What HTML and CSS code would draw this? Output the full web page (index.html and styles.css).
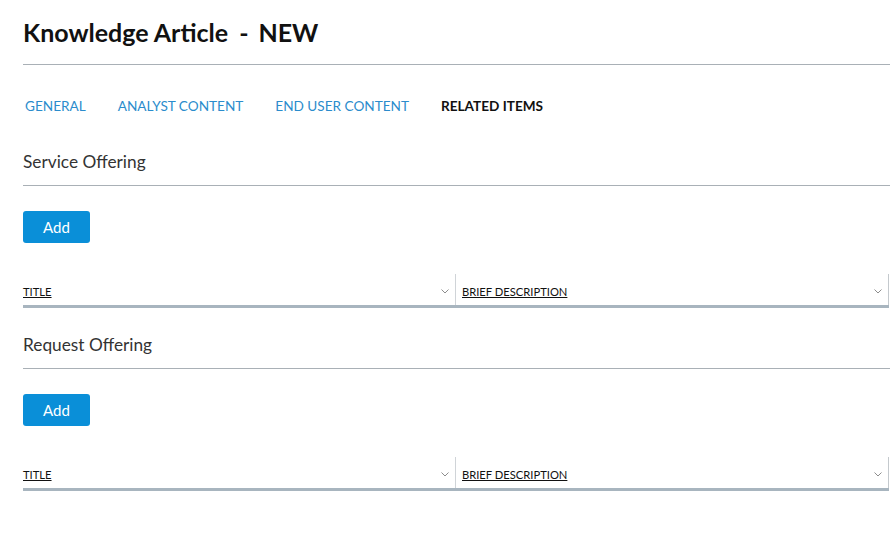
FILE: index.html
```html
<!DOCTYPE html>
<html>
<head>
<meta charset="utf-8">
<link rel="stylesheet" href="styles.css">
</head>
<body>
<div class="page">
  <h1 class="title">Knowledge Article<span class="sep">-</span>NEW</h1>
  <nav class="tabs">
    <span class="tab">GENERAL</span>
    <span class="tab">ANALYST CONTENT</span>
    <span class="tab">END USER CONTENT</span>
    <span class="tab active">RELATED ITEMS</span>
  </nav>

  <section class="section">
    <h2 class="section-title">Service Offering</h2>
    <div class="actions"><button class="btn">Add</button></div>
    <div class="grid-head">
      <div class="col col-title"><span class="col-label">TITLE</span><svg class="chev" viewBox="0 0 8 5" width="8" height="5"><path d="M0.5 0.5l3.5 3.5 3.5-3.5" fill="none" stroke="#8d8d8d" stroke-width="1"/></svg></div>
      <div class="col col-desc"><span class="col-label">BRIEF DESCRIPTION</span><svg class="chev" viewBox="0 0 8 5" width="8" height="5"><path d="M0.5 0.5l3.5 3.5 3.5-3.5" fill="none" stroke="#8d8d8d" stroke-width="1"/></svg></div>
    </div>
  </section>

  <section class="section">
    <h2 class="section-title">Request Offering</h2>
    <div class="actions"><button class="btn">Add</button></div>
    <div class="grid-head">
      <div class="col col-title"><span class="col-label">TITLE</span><svg class="chev" viewBox="0 0 8 5" width="8" height="5"><path d="M0.5 0.5l3.5 3.5 3.5-3.5" fill="none" stroke="#8d8d8d" stroke-width="1"/></svg></div>
      <div class="col col-desc"><span class="col-label">BRIEF DESCRIPTION</span><svg class="chev" viewBox="0 0 8 5" width="8" height="5"><path d="M0.5 0.5l3.5 3.5 3.5-3.5" fill="none" stroke="#8d8d8d" stroke-width="1"/></svg></div>
    </div>
  </section>
</div>
</body>
</html>
```

FILE: styles.css
```css
html, body {
  margin: 0;
  padding: 0;
  background: #fff;
}
body {
  font-family: "Lato", "Liberation Sans", sans-serif;
  color: #222;
}
.page {
  padding: 16px 0 0 23px;
}
.title {
  margin: 0;
  font-size: 25px;
  font-weight: 700;
  color: #111;
  line-height: 32px;
  padding-bottom: 16px;
  border-bottom: 1px solid #a9b0b6;
}
.sep {
  margin: 0 10px 0 11px;
}
.tabs {
  display: flex;
  gap: 32px;
  padding: 31px 0 9px 2px;
  height: 20px;
  align-items: center;
}
.tab {
  font-size: 13.6px;
  color: #2b8ccc;
  line-height: 20px;
}
.tab.active {
  color: #111;
  font-weight: 700;
}
.section {
  display: flex;
  flex-direction: column;
}
.section-title {
  margin: 0;
  font-size: 17.3px;
  font-weight: 400;
  color: #333;
  line-height: 24px;
  padding: 25px 0 11px;
  border-bottom: 1px solid #a9b0b6;
}
.actions {
  padding-top: 25px;
}
.btn {
  width: 67px;
  height: 32px;
  border: none;
  border-radius: 3px;
  background: #0a8fd8;
  color: #fff;
  font-family: inherit;
  font-size: 15px;
  padding: 0;
}
.grid-head {
  display: flex;
  margin-top: 31px;
  height: 31px;
  border-bottom: 3px solid #a8b5bf;
  margin-right: 1px;
}
.col {
  display: flex;
  align-items: center;
  justify-content: space-between;
  padding-top: 4px;
  box-sizing: border-box;
}
.col-title {
  width: 433px;
  border-right: 1px solid #d0d4d8;
  padding-right: 6px;
}
.col-desc {
  flex: 1;
  padding-left: 6px;
  padding-right: 6px;
  border-right: 1px solid #c4c9cd;
}
.col-label {
  font-size: 11.2px;
  color: #111;
  text-decoration: underline;
}
.chev {
  display: block;
}
```
